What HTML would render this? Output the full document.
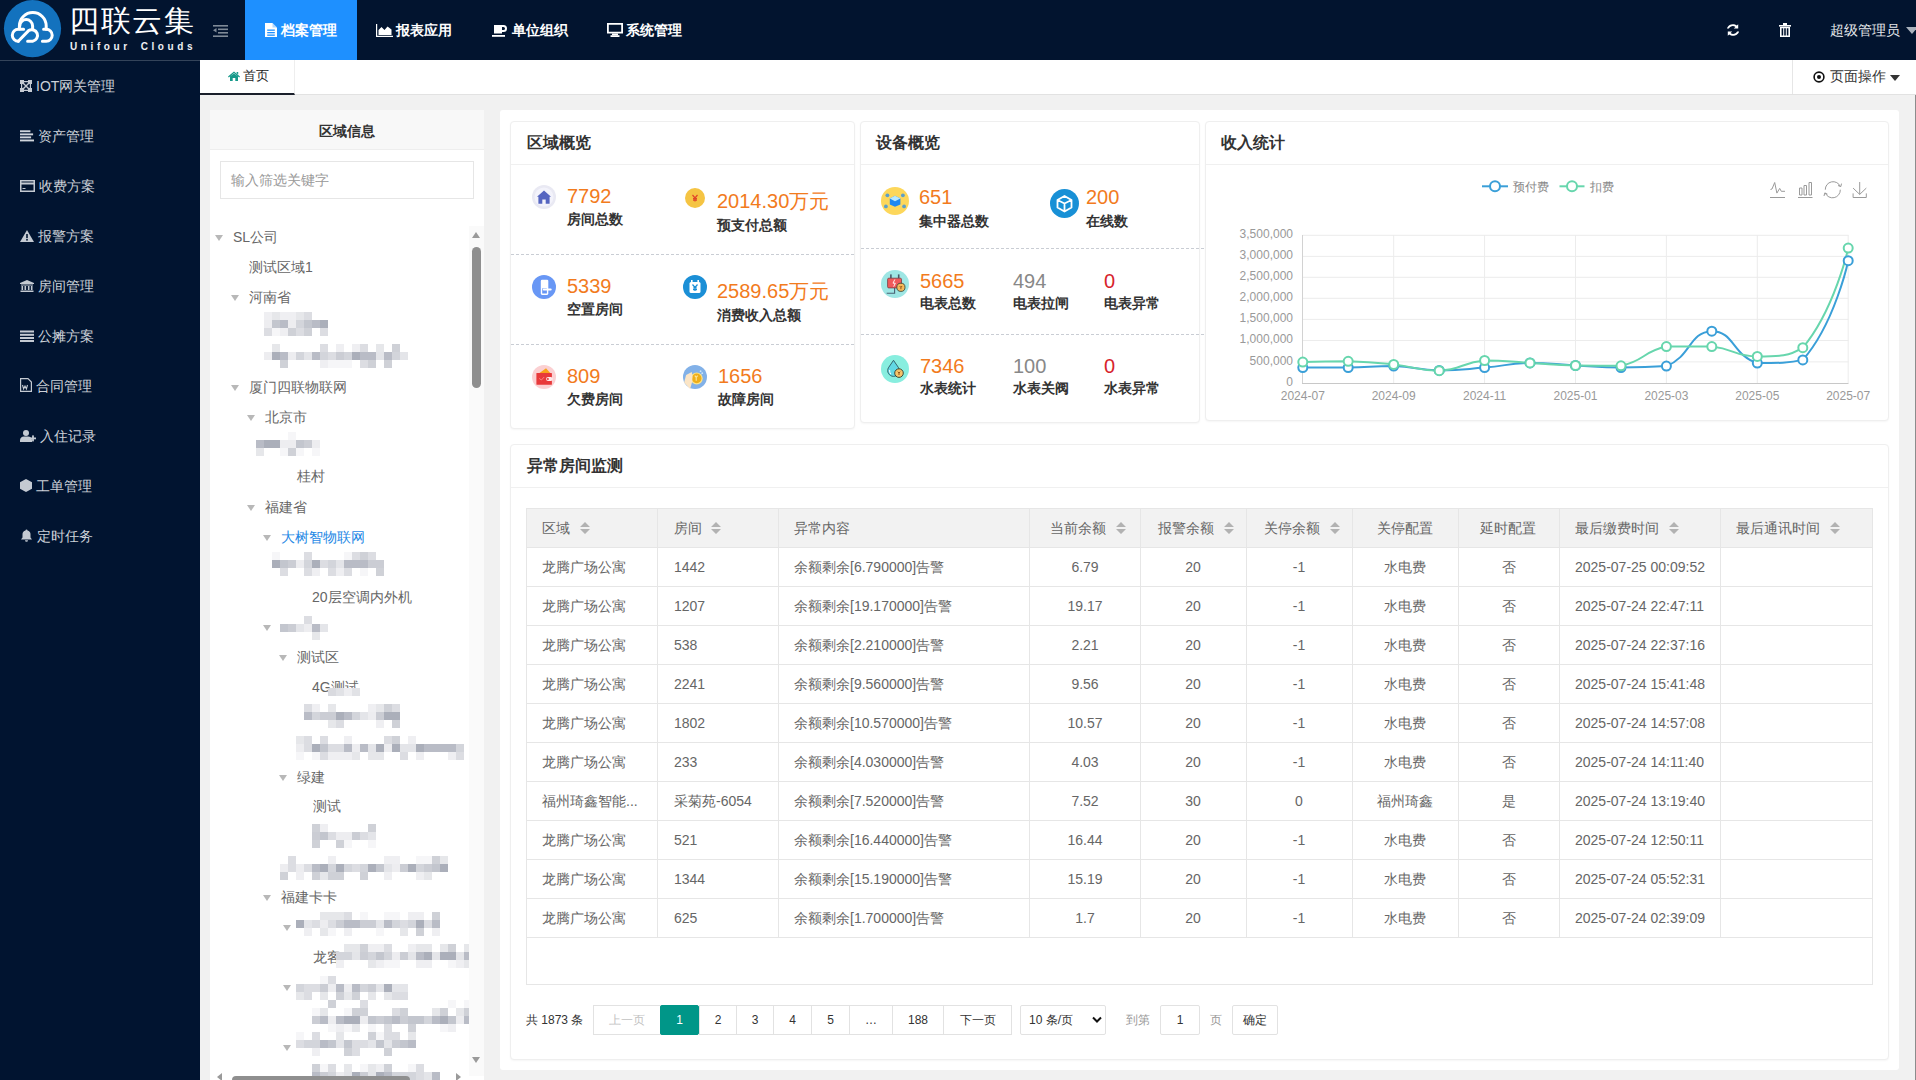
<!DOCTYPE html>
<html><head><meta charset="utf-8">
<style>
*{margin:0;padding:0;box-sizing:border-box}
html,body{width:1916px;height:1080px;overflow:hidden;background:#f1f1f1;font-family:"Liberation Sans",sans-serif;color:#333;position:relative}
.a{position:absolute}
#hdr{left:0;top:0;width:1916px;height:60px;background:#02142f}
#side{left:0;top:60px;width:200px;height:1020px;background:#011430;border-top:1px solid #34445a}
.nav{top:0;height:60px;line-height:60px;color:#fff;font-size:14px;font-weight:bold;white-space:nowrap}
.sit{left:20px;height:20px;line-height:20px;color:#ccd1d8;font-size:14px;font-weight:500;white-space:nowrap}
.sit svg{vertical-align:-1px;margin-right:4px}
#tabbar{left:200px;top:60px;width:1716px;height:35px;background:#fff;border-bottom:1px solid #e2e2e2}
#tree{left:210px;top:110px;width:274px;height:970px;background:#fff}
#main{left:500px;top:110px;width:1399px;height:960px;background:#fff;border-radius:3px}
.card{background:#fff;border:1px solid #efefef;border-radius:4px;box-shadow:0 1px 2px rgba(0,0,0,0.04)}
.ctitle{left:16px;top:12px;font-size:16px;font-weight:bold;color:#333;white-space:nowrap}
.chd{left:0;top:42px;height:1px;width:100%;background:#f0f0f0}
.dash{height:0;border-top:1px dashed #c9cdd4}
.num{font-size:20px;color:#f27b1d;white-space:nowrap;line-height:20px}
.lbl{font-size:14px;font-weight:bold;color:#333;white-space:nowrap;line-height:16px}
.ic{border-radius:50%}
.tr{font-size:14px;color:#666;white-space:nowrap;line-height:16px}
.tri{width:0;height:0;border-left:4.5px solid transparent;border-right:4.5px solid transparent;border-top:6px solid #b8b8b8}
.blur{background:#dcdde2}
table{border-collapse:collapse;table-layout:fixed}
td,th{border:1px solid #e6e6e6;font-size:14px;color:#666;font-weight:normal;height:39px;padding:0 15px;white-space:nowrap;overflow:hidden}
th{background:#f2f2f2}
.td{font-size:14px;line-height:16px;color:#666;white-space:nowrap}
.pg{top:1005px;height:30px;line-height:28px;border:1px solid #e2e2e2;font-size:12px;color:#333;text-align:center;background:#fff}
</style></head><body>
<!-- HEADER -->
<div id="hdr" class="a"></div>
<svg class="a" style="left:0;top:0" width="64" height="60" viewBox="0 0 64 60">
<circle cx="32.5" cy="28.6" r="28.6" fill="#1372be"/>
<g fill="none" stroke="#fff" stroke-width="3" stroke-linecap="round" stroke-linejoin="round">
<path d="M18.3 41.2 A6 6 0 0 1 18.3 29.2 L23.6 29.2"/>
<path d="M18.3 41.2 L28.6 30.6 A5.8 5.8 0 1 1 32.7 41.2 L27.6 41.2"/>
<path d="M42.4 41.2 L46.2 41.2 A6 6 0 0 0 46.2 29.2 L43.6 29.2"/>
<path d="M19.4 29 L19.4 26 A13.4 13.4 0 0 1 46.2 26 L46.2 29.2"/>
<path d="M19.8 26 A6.4 6.4 0 0 1 32.6 26 L32.6 29.6"/>
</g></svg>
<div class="a" style="left:69px;top:3px;font-size:30px;line-height:36px;color:#fff;font-weight:300;letter-spacing:1.5px;white-space:nowrap">四联云集</div>
<div class="a" style="left:70px;top:41px;font-size:10px;line-height:12px;color:#eef0f3;font-weight:bold;letter-spacing:3.6px;word-spacing:3.5px;white-space:nowrap">Unifour Clouds</div>
<svg class="a" style="left:213px;top:25px" width="15" height="12" viewBox="0 0 15 12"><g fill="#7f8a97"><rect x="0" y="0" width="15" height="1.6"/><rect x="5" y="3.5" width="10" height="1.6"/><rect x="5" y="7" width="10" height="1.6"/><rect x="0" y="10.4" width="15" height="1.6"/><path d="M0 5.3 L3.5 3 L3.5 7.6Z"/></g></svg>
<div class="a" style="left:245px;top:0;width:112px;height:60px;background:#1e90ff"></div>
<svg class="a" style="left:265px;top:23px" width="12" height="14" viewBox="0 0 12 14"><path d="M0 0 H7.5 L12 4.5 V14 H0Z" fill="#fff"/><path d="M7.5 0 V4.5 H12" fill="#1e90ff" opacity="0.35"/><g fill="#1e90ff"><rect x="2.2" y="6.5" width="7.6" height="1.3"/><rect x="2.2" y="9" width="7.6" height="1.3"/><rect x="2.2" y="11.5" width="7.6" height="1.3"/></g></svg>
<div class="a nav" style="left:281px">档案管理</div>
<svg class="a" style="left:376px;top:24px" width="17" height="13" viewBox="0 0 17 13"><path d="M0 0 V13 H17 V11.8 H1.2 V0Z" fill="#fff"/><path d="M2.5 11 V6 L5.5 3 L8.5 6 L11.5 2.5 L15.5 5.5 V11Z" fill="#fff"/></svg>
<div class="a nav" style="left:396px">报表应用</div>
<svg class="a" style="left:492px;top:25px" width="16" height="12" viewBox="0 0 16 12"><path d="M2 0 H11.5 A3.5 3.5 0 0 1 11.5 7 H10 V8.5 H2Z M10 2 V5 H11.5 A1.5 1.5 0 0 0 11.5 2Z" fill="#fff" fill-rule="evenodd"/><rect x="0" y="10" width="13" height="1.8" fill="#fff"/></svg>
<div class="a nav" style="left:512px">单位组织</div>
<svg class="a" style="left:607px;top:23px" width="16" height="14" viewBox="0 0 16 14"><path d="M0 0 H16 V10.5 H0Z M1.8 1.8 V8.7 H14.2 V1.8Z" fill="#fff" fill-rule="evenodd"/><rect x="5" y="10.5" width="6" height="1.8" fill="#fff"/><rect x="3.5" y="12.2" width="9" height="1.8" fill="#fff"/></svg>
<div class="a nav" style="left:626px">系统管理</div>
<svg class="a" style="left:1726px;top:23px" width="14" height="14" viewBox="0 0 14 14"><g fill="#fff"><path d="M12.2 1.2 V5.6 H7.8 L9.4 4 A4.2 4.2 0 0 0 2.9 5.6 H0.9 A6.2 6.2 0 0 1 10.8 2.6Z"/><path d="M1.8 12.8 V8.4 H6.2 L4.6 10 A4.2 4.2 0 0 0 11.1 8.4 H13.1 A6.2 6.2 0 0 1 3.2 11.4Z"/></g></svg>
<svg class="a" style="left:1779px;top:23px" width="12" height="14" viewBox="0 0 12 14"><g fill="#fff"><rect x="0" y="2" width="12" height="1.6"/><rect x="4" y="0" width="4" height="2.5"/><path d="M1 4 H11 V14 H1Z M2.6 5.2 V12.6 H4.2 V5.2Z M5.2 5.2 V12.6 H6.8 V5.2Z M7.8 5.2 V12.6 H9.4 V5.2Z" fill-rule="evenodd"/></g></svg>
<div class="a nav" style="left:1830px;font-weight:normal;color:#e6e8eb">超级管理员</div>
<div class="a" style="left:1906px;top:27px;width:0;height:0;border-left:6px solid transparent;border-right:6px solid transparent;border-top:7px solid #aab2bd"></div>
<div id="side" class="a"></div>
<div class="a sit" style="top:76px"><svg width="12" height="12" viewBox="0 0 12 12"><g fill="#c4cad2"><rect x="0" y="0" width="4" height="4"/><rect x="8" y="0" width="4" height="4"/><rect x="0" y="8" width="4" height="4"/><rect x="8" y="8" width="4" height="4"/><path d="M3 2 L10 9 L9 10 L2 3Z M9 2 L10 3 L3 10 L2 9Z"/><path d="M4 1 H8 V2.2 H4Z M4 9.8 H8 V11 H4Z M1 4 H2.2 V8 H1Z M9.8 4 H11 V8 H9.8Z"/></g></svg>IOT网关管理</div>
<div class="a sit" style="top:126px"><svg width="14" height="12" viewBox="0 0 14 12"><g fill="#d0d5dc"><rect x="0" y="0.3" width="10.4" height="1.9"/><rect x="0" y="3.4" width="13.1" height="1.9"/><rect x="0" y="6.4" width="11.1" height="1.9"/><rect x="0" y="9.5" width="14.2" height="1.9"/></g></svg>资产管理</div>
<div class="a sit" style="top:176px"><svg width="15" height="12" viewBox="0 0 15 12"><path d="M0 0 H15 V12 H0Z M1.5 4.5 V10.5 H13.5 V4.5Z M1.5 1.5 V2.5 H13.5 V1.5Z" fill="#c4cad2" fill-rule="evenodd"/><rect x="2.5" y="8" width="3" height="1" fill="#c4cad2"/></svg>收费方案</div>
<div class="a sit" style="top:226px"><svg width="14" height="12" viewBox="0 0 14 12"><path d="M7 0 L14 12 H0Z" fill="#c4cad2"/><rect x="6.2" y="4" width="1.6" height="4.2" fill="#011430"/><rect x="6.2" y="9" width="1.6" height="1.6" fill="#011430"/></svg>报警方案</div>
<div class="a sit" style="top:276px"><svg width="14" height="12" viewBox="0 0 14 12"><g fill="#c4cad2"><path d="M7 0 L14 3 V4 H0 V3Z"/><rect x="1" y="4.5" width="12" height="1"/><rect x="1.5" y="6" width="1.6" height="4"/><rect x="4.5" y="6" width="1.6" height="4"/><rect x="7.9" y="6" width="1.6" height="4"/><rect x="10.9" y="6" width="1.6" height="4"/><rect x="0.5" y="10.5" width="13" height="1.5"/></g></svg>房间管理</div>
<div class="a sit" style="top:326px"><svg width="14" height="12" viewBox="0 0 14 12"><g fill="#c4cad2"><rect x="0" y="0.5" width="14" height="2"/><rect x="0" y="3.8" width="14" height="2"/><rect x="0" y="7" width="14" height="2"/><rect x="0" y="10" width="14" height="2"/></g></svg>公摊方案</div>
<div class="a sit" style="top:376px"><svg width="12" height="14" viewBox="0 0 12 14"><path d="M0.6 0.6 H8 L11.4 4 V13.4 H0.6Z" fill="none" stroke="#c4cad2" stroke-width="1.2"/><path d="M2.5 7 L3.6 11 L5 8 L6.4 11 L7.5 7" fill="none" stroke="#c4cad2" stroke-width="1.1"/></svg>合同管理</div>
<div class="a sit" style="top:426px"><svg width="16" height="12" viewBox="0 0 16 12"><g fill="#c4cad2"><circle cx="6" cy="3" r="3"/><path d="M0 12 V10 A4 4 0 0 1 4 6.5 H8 A4 4 0 0 1 12 10 V12Z"/><rect x="10" y="7.5" width="6" height="1.8"/><rect x="12.1" y="5.4" width="1.8" height="6"/></g></svg>入住记录</div>
<div class="a sit" style="top:476px"><svg width="12" height="13" viewBox="0 0 12 13"><path d="M6 0 L12 3.2 V9.8 L6 13 L0 9.8 V3.2Z" fill="#c4cad2"/></svg>工单管理</div>
<div class="a sit" style="top:526px"><svg width="13" height="13" viewBox="0 0 13 13"><path d="M6.5 0.5 A1 1 0 0 1 7.5 1.5 A4 4 0 0 1 10.5 5.5 V8.5 L12 10.5 H1 L2.5 8.5 V5.5 A4 4 0 0 1 5.5 1.5 A1 1 0 0 1 6.5 0.5Z M5 11.2 H8 A1.5 1.5 0 0 1 5 11.2Z" fill="#c4cad2"/></svg>定时任务</div>
<div id="tabbar" class="a"></div>
<div class="a" style="left:200px;top:60px;width:95px;height:35px;background:#fff;border-right:1px solid #eee;border-bottom:2px solid #1a1f2b"></div>
<svg class="a" style="left:228px;top:71px" width="12" height="10" viewBox="0 0 12 10"><path d="M6 0.5 L12 5.6 L11.2 6.4 L6 2 L0.8 6.4 L0 5.6Z M8.6 1 H10.2 V3.6 L8.6 2.3Z M2 5.6 L6 2.4 L10 5.6 V10 H7.3 V7 H4.7 V10 H2Z" fill="#16998a"/></svg>
<div class="a" style="left:243px;top:68px;font-size:13px;line-height:16px;color:#222;white-space:nowrap">首页</div>
<div class="a" style="left:1792px;top:60px;width:1px;height:34px;background:#e6e6e6"></div>
<svg class="a" style="left:1813px;top:71px" width="12" height="12" viewBox="0 0 12 12"><circle cx="6" cy="6" r="4.9" fill="none" stroke="#111" stroke-width="1.6"/><circle cx="6" cy="6" r="2" fill="#111"/></svg>
<div class="a" style="left:1830px;top:68px;font-size:14px;line-height:16px;color:#333;white-space:nowrap">页面操作</div>
<div class="a" style="left:1890px;top:75px;width:0;height:0;border-left:5.5px solid transparent;border-right:5.5px solid transparent;border-top:6px solid #333"></div>
<div class="a" style="left:1915px;top:95px;width:1px;height:985px;background:#8c8c8c"></div>
<div id="tree" class="a"></div>
<div class="a" style="left:210px;top:110px;width:274px;height:40px;background:#f8f8f8;border-bottom:1px solid #eee"></div>
<div class="a" style="left:210px;top:123px;width:274px;text-align:center;font-size:14px;line-height:16px;font-weight:bold;color:#333">区域信息</div>
<div class="a" style="left:220px;top:161px;width:254px;height:38px;border:1px solid #e6e6e6;background:#fff"></div>
<div class="a" style="left:231px;top:172px;font-size:14px;line-height:16px;color:#999;white-space:nowrap">输入筛选关键字</div>
<div class="a tri" style="left:215px;top:235px"></div>
<div class="a tr" style="left:233px;top:229px">SL公司</div>
<div class="a tr" style="left:249px;top:259px">测试区域1</div>
<div class="a tri" style="left:231px;top:295px"></div>
<div class="a tr" style="left:249px;top:289px">河南省</div>
<div class="a tri" style="left:231px;top:385px"></div>
<div class="a tr" style="left:249px;top:379px">厦门四联物联网</div>
<div class="a tri" style="left:247px;top:415px"></div>
<div class="a tr" style="left:265px;top:409px">北京市</div>
<div class="a tr" style="left:297px;top:468px">桂村</div>
<div class="a tri" style="left:247px;top:505px"></div>
<div class="a tr" style="left:265px;top:499px">福建省</div>
<div class="a tri" style="left:263px;top:535px"></div>
<div class="a tr" style="left:281px;top:529px;color:#1e88e5">大树智物联网</div>
<div class="a tr" style="left:312px;top:589px">20层空调内外机</div>
<div class="a tri" style="left:263px;top:625px"></div>
<div class="a tri" style="left:279px;top:655px"></div>
<div class="a tr" style="left:297px;top:649px">测试区</div>
<div class="a tr" style="left:312px;top:679px">4G测试</div>
<div class="a tri" style="left:279px;top:775px"></div>
<div class="a tr" style="left:297px;top:769px">绿建</div>
<div class="a tr" style="left:313px;top:798px">测试</div>
<div class="a tri" style="left:263px;top:895px"></div>
<div class="a tr" style="left:281px;top:889px">福建卡卡</div>
<div class="a tri" style="left:283px;top:925px"></div>
<div class="a tr" style="left:313px;top:949px">龙客</div>
<div class="a tri" style="left:283px;top:985px"></div>
<div class="a tri" style="left:283px;top:1045px"></div>
<svg class="a" style="left:0;top:0" width="484" height="1080" viewBox="0 0 484 1080" shape-rendering="crispEdges">
<rect x="264" y="312" width="8" height="8" fill="#efeff2"/>
<rect x="272" y="312" width="8" height="8" fill="#e6e7ea"/>
<rect x="280" y="312" width="8" height="8" fill="#efeff2"/>
<rect x="288" y="312" width="8" height="8" fill="#efeff2"/>
<rect x="296" y="312" width="8" height="8" fill="#e6e7ea"/>
<rect x="304" y="312" width="8" height="8" fill="#dcdde2"/>
<rect x="264" y="320" width="8" height="8" fill="#ededf0"/>
<rect x="272" y="320" width="8" height="8" fill="#c3c6ce"/>
<rect x="280" y="320" width="8" height="8" fill="#b9bcc6"/>
<rect x="288" y="320" width="8" height="8" fill="#ededf0"/>
<rect x="296" y="320" width="8" height="8" fill="#d3d5db"/>
<rect x="304" y="320" width="8" height="8" fill="#c3c6ce"/>
<rect x="312" y="320" width="8" height="8" fill="#b9bcc6"/>
<rect x="320" y="320" width="8" height="8" fill="#abafba"/>
<rect x="264" y="328" width="8" height="8" fill="#dcdde2"/>
<rect x="272" y="328" width="8" height="8" fill="#f6f6f8"/>
<rect x="280" y="328" width="8" height="8" fill="#efeff2"/>
<rect x="288" y="328" width="8" height="8" fill="#cfd1d7"/>
<rect x="296" y="328" width="8" height="8" fill="#dcdde2"/>
<rect x="304" y="328" width="8" height="8" fill="#cfd1d7"/>
<rect x="320" y="328" width="8" height="8" fill="#dcdde2"/>
<rect x="272" y="344" width="8" height="8" fill="#e6e7ea"/>
<rect x="320" y="344" width="8" height="8" fill="#dcdde2"/>
<rect x="336" y="344" width="8" height="8" fill="#efeff2"/>
<rect x="352" y="344" width="8" height="8" fill="#efeff2"/>
<rect x="360" y="344" width="8" height="8" fill="#dcdde2"/>
<rect x="376" y="344" width="8" height="8" fill="#e6e7ea"/>
<rect x="392" y="344" width="8" height="8" fill="#cfd1d7"/>
<rect x="264" y="352" width="8" height="8" fill="#ededf0"/>
<rect x="272" y="352" width="8" height="8" fill="#abafba"/>
<rect x="280" y="352" width="8" height="8" fill="#b9bcc6"/>
<rect x="288" y="352" width="8" height="8" fill="#ededf0"/>
<rect x="296" y="352" width="8" height="8" fill="#d3d5db"/>
<rect x="304" y="352" width="8" height="8" fill="#e4e5e9"/>
<rect x="312" y="352" width="8" height="8" fill="#b9bcc6"/>
<rect x="320" y="352" width="8" height="8" fill="#d3d5db"/>
<rect x="328" y="352" width="8" height="8" fill="#dcdde2"/>
<rect x="336" y="352" width="8" height="8" fill="#cbcdd4"/>
<rect x="344" y="352" width="8" height="8" fill="#d3d5db"/>
<rect x="352" y="352" width="8" height="8" fill="#abafba"/>
<rect x="360" y="352" width="8" height="8" fill="#b9bcc6"/>
<rect x="368" y="352" width="8" height="8" fill="#b9bcc6"/>
<rect x="376" y="352" width="8" height="8" fill="#e4e5e9"/>
<rect x="384" y="352" width="8" height="8" fill="#b9bcc6"/>
<rect x="392" y="352" width="8" height="8" fill="#d3d5db"/>
<rect x="400" y="352" width="8" height="8" fill="#e4e5e9"/>
<rect x="280" y="360" width="8" height="8" fill="#cfd1d7"/>
<rect x="320" y="360" width="8" height="8" fill="#efeff2"/>
<rect x="328" y="360" width="8" height="8" fill="#f6f6f8"/>
<rect x="336" y="360" width="8" height="8" fill="#f6f6f8"/>
<rect x="344" y="360" width="8" height="8" fill="#f6f6f8"/>
<rect x="360" y="360" width="8" height="8" fill="#dcdde2"/>
<rect x="368" y="360" width="8" height="8" fill="#cfd1d7"/>
<rect x="384" y="360" width="8" height="8" fill="#cfd1d7"/>
<rect x="288" y="432" width="8" height="8" fill="#f6f6f8"/>
<rect x="256" y="440" width="8" height="8" fill="#b9bcc6"/>
<rect x="264" y="440" width="8" height="8" fill="#abafba"/>
<rect x="272" y="440" width="8" height="8" fill="#abafba"/>
<rect x="280" y="440" width="8" height="8" fill="#ededf0"/>
<rect x="288" y="440" width="8" height="8" fill="#ededf0"/>
<rect x="296" y="440" width="8" height="8" fill="#c3c6ce"/>
<rect x="304" y="440" width="8" height="8" fill="#cbcdd4"/>
<rect x="312" y="440" width="8" height="8" fill="#ededf0"/>
<rect x="256" y="448" width="8" height="8" fill="#e6e7ea"/>
<rect x="280" y="448" width="8" height="8" fill="#f6f6f8"/>
<rect x="288" y="448" width="8" height="8" fill="#cfd1d7"/>
<rect x="296" y="448" width="8" height="8" fill="#f6f6f8"/>
<rect x="312" y="448" width="8" height="8" fill="#f6f6f8"/>
<rect x="272" y="552" width="8" height="8" fill="#f6f6f8"/>
<rect x="304" y="552" width="8" height="8" fill="#dcdde2"/>
<rect x="344" y="552" width="8" height="8" fill="#f6f6f8"/>
<rect x="352" y="552" width="8" height="8" fill="#dcdde2"/>
<rect x="360" y="552" width="8" height="8" fill="#cfd1d7"/>
<rect x="368" y="552" width="8" height="8" fill="#dcdde2"/>
<rect x="272" y="560" width="8" height="8" fill="#abafba"/>
<rect x="280" y="560" width="8" height="8" fill="#c3c6ce"/>
<rect x="288" y="560" width="8" height="8" fill="#cbcdd4"/>
<rect x="296" y="560" width="8" height="8" fill="#ededf0"/>
<rect x="304" y="560" width="8" height="8" fill="#d3d5db"/>
<rect x="312" y="560" width="8" height="8" fill="#abafba"/>
<rect x="320" y="560" width="8" height="8" fill="#dcdde2"/>
<rect x="328" y="560" width="8" height="8" fill="#d3d5db"/>
<rect x="336" y="560" width="8" height="8" fill="#e4e5e9"/>
<rect x="344" y="560" width="8" height="8" fill="#b9bcc6"/>
<rect x="352" y="560" width="8" height="8" fill="#b9bcc6"/>
<rect x="360" y="560" width="8" height="8" fill="#b9bcc6"/>
<rect x="368" y="560" width="8" height="8" fill="#cbcdd4"/>
<rect x="376" y="560" width="8" height="8" fill="#cbcdd4"/>
<rect x="280" y="568" width="8" height="8" fill="#dcdde2"/>
<rect x="304" y="568" width="8" height="8" fill="#dcdde2"/>
<rect x="312" y="568" width="8" height="8" fill="#efeff2"/>
<rect x="328" y="568" width="8" height="8" fill="#dcdde2"/>
<rect x="336" y="568" width="8" height="8" fill="#efeff2"/>
<rect x="344" y="568" width="8" height="8" fill="#dcdde2"/>
<rect x="360" y="568" width="8" height="8" fill="#f6f6f8"/>
<rect x="376" y="568" width="8" height="8" fill="#cfd1d7"/>
<rect x="304" y="616" width="8" height="8" fill="#dcdde2"/>
<rect x="280" y="624" width="8" height="8" fill="#c3c6ce"/>
<rect x="288" y="624" width="8" height="8" fill="#cbcdd4"/>
<rect x="296" y="624" width="8" height="8" fill="#e4e5e9"/>
<rect x="304" y="624" width="8" height="8" fill="#ededf0"/>
<rect x="312" y="624" width="8" height="8" fill="#b9bcc6"/>
<rect x="320" y="624" width="8" height="8" fill="#e4e5e9"/>
<rect x="312" y="632" width="8" height="8" fill="#e6e7ea"/>
<rect x="328" y="688" width="8" height="8" fill="#d9dadf"/>
<rect x="336" y="688" width="8" height="8" fill="#e1e2e6"/>
<rect x="344" y="688" width="8" height="8" fill="#eeeef1"/>
<rect x="352" y="688" width="8" height="8" fill="#e1e2e6"/>
<rect x="304" y="704" width="8" height="8" fill="#dcdde2"/>
<rect x="312" y="704" width="8" height="8" fill="#efeff2"/>
<rect x="328" y="704" width="8" height="8" fill="#e6e7ea"/>
<rect x="368" y="704" width="8" height="8" fill="#efeff2"/>
<rect x="376" y="704" width="8" height="8" fill="#e6e7ea"/>
<rect x="384" y="704" width="8" height="8" fill="#cfd1d7"/>
<rect x="392" y="704" width="8" height="8" fill="#dcdde2"/>
<rect x="304" y="712" width="8" height="8" fill="#b9bcc6"/>
<rect x="312" y="712" width="8" height="8" fill="#d3d5db"/>
<rect x="320" y="712" width="8" height="8" fill="#cbcdd4"/>
<rect x="328" y="712" width="8" height="8" fill="#cbcdd4"/>
<rect x="336" y="712" width="8" height="8" fill="#abafba"/>
<rect x="344" y="712" width="8" height="8" fill="#b9bcc6"/>
<rect x="352" y="712" width="8" height="8" fill="#d3d5db"/>
<rect x="360" y="712" width="8" height="8" fill="#e4e5e9"/>
<rect x="368" y="712" width="8" height="8" fill="#ededf0"/>
<rect x="376" y="712" width="8" height="8" fill="#cbcdd4"/>
<rect x="384" y="712" width="8" height="8" fill="#abafba"/>
<rect x="392" y="712" width="8" height="8" fill="#abafba"/>
<rect x="328" y="720" width="8" height="8" fill="#e6e7ea"/>
<rect x="336" y="720" width="8" height="8" fill="#dcdde2"/>
<rect x="376" y="720" width="8" height="8" fill="#efeff2"/>
<rect x="392" y="720" width="8" height="8" fill="#cfd1d7"/>
<rect x="296" y="736" width="8" height="8" fill="#e6e7ea"/>
<rect x="304" y="736" width="8" height="8" fill="#dcdde2"/>
<rect x="320" y="736" width="8" height="8" fill="#dcdde2"/>
<rect x="344" y="736" width="8" height="8" fill="#efeff2"/>
<rect x="384" y="736" width="8" height="8" fill="#dcdde2"/>
<rect x="392" y="736" width="8" height="8" fill="#cfd1d7"/>
<rect x="408" y="736" width="8" height="8" fill="#efeff2"/>
<rect x="296" y="744" width="8" height="8" fill="#ededf0"/>
<rect x="304" y="744" width="8" height="8" fill="#dcdde2"/>
<rect x="312" y="744" width="8" height="8" fill="#abafba"/>
<rect x="320" y="744" width="8" height="8" fill="#c3c6ce"/>
<rect x="328" y="744" width="8" height="8" fill="#dcdde2"/>
<rect x="336" y="744" width="8" height="8" fill="#dcdde2"/>
<rect x="344" y="744" width="8" height="8" fill="#b9bcc6"/>
<rect x="352" y="744" width="8" height="8" fill="#ededf0"/>
<rect x="360" y="744" width="8" height="8" fill="#b9bcc6"/>
<rect x="368" y="744" width="8" height="8" fill="#e4e5e9"/>
<rect x="376" y="744" width="8" height="8" fill="#abafba"/>
<rect x="384" y="744" width="8" height="8" fill="#ededf0"/>
<rect x="392" y="744" width="8" height="8" fill="#abafba"/>
<rect x="400" y="744" width="8" height="8" fill="#e4e5e9"/>
<rect x="408" y="744" width="8" height="8" fill="#e4e5e9"/>
<rect x="416" y="744" width="8" height="8" fill="#abafba"/>
<rect x="424" y="744" width="8" height="8" fill="#b9bcc6"/>
<rect x="432" y="744" width="8" height="8" fill="#b9bcc6"/>
<rect x="440" y="744" width="8" height="8" fill="#b9bcc6"/>
<rect x="448" y="744" width="8" height="8" fill="#b9bcc6"/>
<rect x="456" y="744" width="8" height="8" fill="#d3d5db"/>
<rect x="296" y="752" width="8" height="8" fill="#f6f6f8"/>
<rect x="312" y="752" width="8" height="8" fill="#f6f6f8"/>
<rect x="320" y="752" width="8" height="8" fill="#dcdde2"/>
<rect x="328" y="752" width="8" height="8" fill="#efeff2"/>
<rect x="336" y="752" width="8" height="8" fill="#efeff2"/>
<rect x="344" y="752" width="8" height="8" fill="#efeff2"/>
<rect x="352" y="752" width="8" height="8" fill="#e6e7ea"/>
<rect x="368" y="752" width="8" height="8" fill="#e6e7ea"/>
<rect x="376" y="752" width="8" height="8" fill="#e6e7ea"/>
<rect x="400" y="752" width="8" height="8" fill="#dcdde2"/>
<rect x="416" y="752" width="8" height="8" fill="#efeff2"/>
<rect x="448" y="752" width="8" height="8" fill="#efeff2"/>
<rect x="456" y="752" width="8" height="8" fill="#dcdde2"/>
<rect x="312" y="824" width="8" height="8" fill="#cfd1d7"/>
<rect x="320" y="824" width="8" height="8" fill="#efeff2"/>
<rect x="368" y="824" width="8" height="8" fill="#cfd1d7"/>
<rect x="312" y="832" width="8" height="8" fill="#cbcdd4"/>
<rect x="320" y="832" width="8" height="8" fill="#c3c6ce"/>
<rect x="328" y="832" width="8" height="8" fill="#dcdde2"/>
<rect x="336" y="832" width="8" height="8" fill="#ededf0"/>
<rect x="344" y="832" width="8" height="8" fill="#ededf0"/>
<rect x="352" y="832" width="8" height="8" fill="#cbcdd4"/>
<rect x="360" y="832" width="8" height="8" fill="#dcdde2"/>
<rect x="368" y="832" width="8" height="8" fill="#e4e5e9"/>
<rect x="312" y="840" width="8" height="8" fill="#cfd1d7"/>
<rect x="336" y="840" width="8" height="8" fill="#cfd1d7"/>
<rect x="344" y="840" width="8" height="8" fill="#f6f6f8"/>
<rect x="368" y="840" width="8" height="8" fill="#f6f6f8"/>
<rect x="288" y="856" width="8" height="8" fill="#dcdde2"/>
<rect x="328" y="856" width="8" height="8" fill="#efeff2"/>
<rect x="384" y="856" width="8" height="8" fill="#efeff2"/>
<rect x="392" y="856" width="8" height="8" fill="#efeff2"/>
<rect x="416" y="856" width="8" height="8" fill="#f6f6f8"/>
<rect x="424" y="856" width="8" height="8" fill="#f6f6f8"/>
<rect x="432" y="856" width="8" height="8" fill="#cfd1d7"/>
<rect x="440" y="856" width="8" height="8" fill="#e6e7ea"/>
<rect x="280" y="864" width="8" height="8" fill="#ededf0"/>
<rect x="288" y="864" width="8" height="8" fill="#dcdde2"/>
<rect x="296" y="864" width="8" height="8" fill="#ededf0"/>
<rect x="304" y="864" width="8" height="8" fill="#dcdde2"/>
<rect x="312" y="864" width="8" height="8" fill="#b9bcc6"/>
<rect x="320" y="864" width="8" height="8" fill="#abafba"/>
<rect x="328" y="864" width="8" height="8" fill="#d3d5db"/>
<rect x="336" y="864" width="8" height="8" fill="#abafba"/>
<rect x="344" y="864" width="8" height="8" fill="#d3d5db"/>
<rect x="352" y="864" width="8" height="8" fill="#dcdde2"/>
<rect x="360" y="864" width="8" height="8" fill="#d3d5db"/>
<rect x="368" y="864" width="8" height="8" fill="#abafba"/>
<rect x="376" y="864" width="8" height="8" fill="#c3c6ce"/>
<rect x="384" y="864" width="8" height="8" fill="#e4e5e9"/>
<rect x="392" y="864" width="8" height="8" fill="#ededf0"/>
<rect x="400" y="864" width="8" height="8" fill="#cbcdd4"/>
<rect x="408" y="864" width="8" height="8" fill="#abafba"/>
<rect x="416" y="864" width="8" height="8" fill="#d3d5db"/>
<rect x="424" y="864" width="8" height="8" fill="#cbcdd4"/>
<rect x="432" y="864" width="8" height="8" fill="#c3c6ce"/>
<rect x="440" y="864" width="8" height="8" fill="#abafba"/>
<rect x="280" y="872" width="8" height="8" fill="#cfd1d7"/>
<rect x="296" y="872" width="8" height="8" fill="#efeff2"/>
<rect x="312" y="872" width="8" height="8" fill="#cfd1d7"/>
<rect x="320" y="872" width="8" height="8" fill="#e6e7ea"/>
<rect x="328" y="872" width="8" height="8" fill="#cfd1d7"/>
<rect x="336" y="872" width="8" height="8" fill="#cfd1d7"/>
<rect x="360" y="872" width="8" height="8" fill="#cfd1d7"/>
<rect x="384" y="872" width="8" height="8" fill="#efeff2"/>
<rect x="416" y="872" width="8" height="8" fill="#efeff2"/>
<rect x="424" y="872" width="8" height="8" fill="#e6e7ea"/>
<rect x="320" y="912" width="8" height="8" fill="#e6e7ea"/>
<rect x="328" y="912" width="8" height="8" fill="#e6e7ea"/>
<rect x="336" y="912" width="8" height="8" fill="#e6e7ea"/>
<rect x="344" y="912" width="8" height="8" fill="#dcdde2"/>
<rect x="360" y="912" width="8" height="8" fill="#f6f6f8"/>
<rect x="384" y="912" width="8" height="8" fill="#f6f6f8"/>
<rect x="392" y="912" width="8" height="8" fill="#f6f6f8"/>
<rect x="408" y="912" width="8" height="8" fill="#efeff2"/>
<rect x="416" y="912" width="8" height="8" fill="#efeff2"/>
<rect x="432" y="912" width="8" height="8" fill="#cfd1d7"/>
<rect x="296" y="920" width="8" height="8" fill="#abafba"/>
<rect x="304" y="920" width="8" height="8" fill="#e4e5e9"/>
<rect x="312" y="920" width="8" height="8" fill="#dcdde2"/>
<rect x="320" y="920" width="8" height="8" fill="#ededf0"/>
<rect x="328" y="920" width="8" height="8" fill="#dcdde2"/>
<rect x="336" y="920" width="8" height="8" fill="#cbcdd4"/>
<rect x="344" y="920" width="8" height="8" fill="#b9bcc6"/>
<rect x="352" y="920" width="8" height="8" fill="#b9bcc6"/>
<rect x="360" y="920" width="8" height="8" fill="#cbcdd4"/>
<rect x="368" y="920" width="8" height="8" fill="#cbcdd4"/>
<rect x="376" y="920" width="8" height="8" fill="#e4e5e9"/>
<rect x="384" y="920" width="8" height="8" fill="#b9bcc6"/>
<rect x="392" y="920" width="8" height="8" fill="#d3d5db"/>
<rect x="400" y="920" width="8" height="8" fill="#dcdde2"/>
<rect x="408" y="920" width="8" height="8" fill="#d3d5db"/>
<rect x="416" y="920" width="8" height="8" fill="#abafba"/>
<rect x="424" y="920" width="8" height="8" fill="#dcdde2"/>
<rect x="432" y="920" width="8" height="8" fill="#b9bcc6"/>
<rect x="304" y="928" width="8" height="8" fill="#efeff2"/>
<rect x="320" y="928" width="8" height="8" fill="#e6e7ea"/>
<rect x="328" y="928" width="8" height="8" fill="#f6f6f8"/>
<rect x="344" y="928" width="8" height="8" fill="#efeff2"/>
<rect x="376" y="928" width="8" height="8" fill="#f6f6f8"/>
<rect x="400" y="928" width="8" height="8" fill="#e6e7ea"/>
<rect x="416" y="928" width="8" height="8" fill="#cfd1d7"/>
<rect x="432" y="928" width="8" height="8" fill="#efeff2"/>
<rect x="344" y="944" width="8" height="8" fill="#e6e7ea"/>
<rect x="352" y="944" width="8" height="8" fill="#e6e7ea"/>
<rect x="360" y="944" width="8" height="8" fill="#cfd1d7"/>
<rect x="368" y="944" width="8" height="8" fill="#efeff2"/>
<rect x="376" y="944" width="8" height="8" fill="#efeff2"/>
<rect x="384" y="944" width="8" height="8" fill="#dcdde2"/>
<rect x="408" y="944" width="8" height="8" fill="#efeff2"/>
<rect x="416" y="944" width="8" height="8" fill="#e6e7ea"/>
<rect x="424" y="944" width="8" height="8" fill="#e6e7ea"/>
<rect x="440" y="944" width="8" height="8" fill="#e6e7ea"/>
<rect x="448" y="944" width="8" height="8" fill="#cfd1d7"/>
<rect x="464" y="944" width="8" height="8" fill="#e6e7ea"/>
<rect x="336" y="952" width="8" height="8" fill="#d3d5db"/>
<rect x="344" y="952" width="8" height="8" fill="#d3d5db"/>
<rect x="352" y="952" width="8" height="8" fill="#e4e5e9"/>
<rect x="360" y="952" width="8" height="8" fill="#cbcdd4"/>
<rect x="368" y="952" width="8" height="8" fill="#d3d5db"/>
<rect x="376" y="952" width="8" height="8" fill="#c3c6ce"/>
<rect x="384" y="952" width="8" height="8" fill="#d3d5db"/>
<rect x="392" y="952" width="8" height="8" fill="#ededf0"/>
<rect x="400" y="952" width="8" height="8" fill="#cbcdd4"/>
<rect x="408" y="952" width="8" height="8" fill="#e4e5e9"/>
<rect x="416" y="952" width="8" height="8" fill="#b9bcc6"/>
<rect x="424" y="952" width="8" height="8" fill="#abafba"/>
<rect x="432" y="952" width="8" height="8" fill="#e4e5e9"/>
<rect x="440" y="952" width="8" height="8" fill="#abafba"/>
<rect x="448" y="952" width="8" height="8" fill="#abafba"/>
<rect x="456" y="952" width="8" height="8" fill="#e4e5e9"/>
<rect x="464" y="952" width="8" height="8" fill="#b9bcc6"/>
<rect x="336" y="960" width="8" height="8" fill="#efeff2"/>
<rect x="368" y="960" width="8" height="8" fill="#e6e7ea"/>
<rect x="376" y="960" width="8" height="8" fill="#efeff2"/>
<rect x="384" y="960" width="8" height="8" fill="#f6f6f8"/>
<rect x="392" y="960" width="8" height="8" fill="#f6f6f8"/>
<rect x="416" y="960" width="8" height="8" fill="#efeff2"/>
<rect x="424" y="960" width="8" height="8" fill="#efeff2"/>
<rect x="448" y="960" width="8" height="8" fill="#f6f6f8"/>
<rect x="456" y="960" width="8" height="8" fill="#efeff2"/>
<rect x="464" y="960" width="8" height="8" fill="#e6e7ea"/>
<rect x="320" y="976" width="8" height="8" fill="#f6f6f8"/>
<rect x="328" y="976" width="8" height="8" fill="#dcdde2"/>
<rect x="296" y="984" width="8" height="8" fill="#d3d5db"/>
<rect x="304" y="984" width="8" height="8" fill="#dcdde2"/>
<rect x="312" y="984" width="8" height="8" fill="#dcdde2"/>
<rect x="320" y="984" width="8" height="8" fill="#cbcdd4"/>
<rect x="328" y="984" width="8" height="8" fill="#ededf0"/>
<rect x="336" y="984" width="8" height="8" fill="#b9bcc6"/>
<rect x="344" y="984" width="8" height="8" fill="#ededf0"/>
<rect x="352" y="984" width="8" height="8" fill="#b9bcc6"/>
<rect x="360" y="984" width="8" height="8" fill="#d3d5db"/>
<rect x="368" y="984" width="8" height="8" fill="#cbcdd4"/>
<rect x="376" y="984" width="8" height="8" fill="#e4e5e9"/>
<rect x="384" y="984" width="8" height="8" fill="#abafba"/>
<rect x="392" y="984" width="8" height="8" fill="#e4e5e9"/>
<rect x="400" y="984" width="8" height="8" fill="#e4e5e9"/>
<rect x="296" y="992" width="8" height="8" fill="#e6e7ea"/>
<rect x="304" y="992" width="8" height="8" fill="#dcdde2"/>
<rect x="320" y="992" width="8" height="8" fill="#e6e7ea"/>
<rect x="336" y="992" width="8" height="8" fill="#cfd1d7"/>
<rect x="344" y="992" width="8" height="8" fill="#e6e7ea"/>
<rect x="352" y="992" width="8" height="8" fill="#cfd1d7"/>
<rect x="368" y="992" width="8" height="8" fill="#e6e7ea"/>
<rect x="384" y="992" width="8" height="8" fill="#e6e7ea"/>
<rect x="392" y="992" width="8" height="8" fill="#dcdde2"/>
<rect x="400" y="992" width="8" height="8" fill="#dcdde2"/>
<rect x="328" y="1000" width="8" height="8" fill="#cfd1d7"/>
<rect x="360" y="1000" width="8" height="8" fill="#dcdde2"/>
<rect x="448" y="1000" width="8" height="8" fill="#f6f6f8"/>
<rect x="464" y="1000" width="8" height="8" fill="#f6f6f8"/>
<rect x="312" y="1008" width="8" height="8" fill="#f6f6f8"/>
<rect x="320" y="1008" width="8" height="8" fill="#e6e7ea"/>
<rect x="344" y="1008" width="8" height="8" fill="#f6f6f8"/>
<rect x="352" y="1008" width="8" height="8" fill="#cfd1d7"/>
<rect x="360" y="1008" width="8" height="8" fill="#cfd1d7"/>
<rect x="392" y="1008" width="8" height="8" fill="#dcdde2"/>
<rect x="400" y="1008" width="8" height="8" fill="#cfd1d7"/>
<rect x="432" y="1008" width="8" height="8" fill="#e6e7ea"/>
<rect x="440" y="1008" width="8" height="8" fill="#cfd1d7"/>
<rect x="456" y="1008" width="8" height="8" fill="#e6e7ea"/>
<rect x="464" y="1008" width="8" height="8" fill="#cfd1d7"/>
<rect x="312" y="1016" width="8" height="8" fill="#cbcdd4"/>
<rect x="320" y="1016" width="8" height="8" fill="#b9bcc6"/>
<rect x="328" y="1016" width="8" height="8" fill="#ededf0"/>
<rect x="336" y="1016" width="8" height="8" fill="#b9bcc6"/>
<rect x="344" y="1016" width="8" height="8" fill="#abafba"/>
<rect x="352" y="1016" width="8" height="8" fill="#abafba"/>
<rect x="360" y="1016" width="8" height="8" fill="#ededf0"/>
<rect x="368" y="1016" width="8" height="8" fill="#c3c6ce"/>
<rect x="376" y="1016" width="8" height="8" fill="#cbcdd4"/>
<rect x="384" y="1016" width="8" height="8" fill="#c3c6ce"/>
<rect x="392" y="1016" width="8" height="8" fill="#b9bcc6"/>
<rect x="400" y="1016" width="8" height="8" fill="#cbcdd4"/>
<rect x="408" y="1016" width="8" height="8" fill="#c3c6ce"/>
<rect x="416" y="1016" width="8" height="8" fill="#c3c6ce"/>
<rect x="424" y="1016" width="8" height="8" fill="#d3d5db"/>
<rect x="432" y="1016" width="8" height="8" fill="#b9bcc6"/>
<rect x="440" y="1016" width="8" height="8" fill="#abafba"/>
<rect x="448" y="1016" width="8" height="8" fill="#c3c6ce"/>
<rect x="456" y="1016" width="8" height="8" fill="#ededf0"/>
<rect x="464" y="1016" width="8" height="8" fill="#b9bcc6"/>
<rect x="328" y="1024" width="8" height="8" fill="#f6f6f8"/>
<rect x="336" y="1024" width="8" height="8" fill="#efeff2"/>
<rect x="344" y="1024" width="8" height="8" fill="#f6f6f8"/>
<rect x="352" y="1024" width="8" height="8" fill="#e6e7ea"/>
<rect x="368" y="1024" width="8" height="8" fill="#f6f6f8"/>
<rect x="384" y="1024" width="8" height="8" fill="#dcdde2"/>
<rect x="408" y="1024" width="8" height="8" fill="#cfd1d7"/>
<rect x="440" y="1024" width="8" height="8" fill="#f6f6f8"/>
<rect x="448" y="1024" width="8" height="8" fill="#efeff2"/>
<rect x="296" y="1032" width="8" height="8" fill="#f6f6f8"/>
<rect x="312" y="1032" width="8" height="8" fill="#dcdde2"/>
<rect x="336" y="1032" width="8" height="8" fill="#e6e7ea"/>
<rect x="368" y="1032" width="8" height="8" fill="#cfd1d7"/>
<rect x="376" y="1032" width="8" height="8" fill="#f6f6f8"/>
<rect x="384" y="1032" width="8" height="8" fill="#dcdde2"/>
<rect x="392" y="1032" width="8" height="8" fill="#dcdde2"/>
<rect x="408" y="1032" width="8" height="8" fill="#e6e7ea"/>
<rect x="296" y="1040" width="8" height="8" fill="#dcdde2"/>
<rect x="304" y="1040" width="8" height="8" fill="#d3d5db"/>
<rect x="312" y="1040" width="8" height="8" fill="#d3d5db"/>
<rect x="320" y="1040" width="8" height="8" fill="#b9bcc6"/>
<rect x="328" y="1040" width="8" height="8" fill="#c3c6ce"/>
<rect x="336" y="1040" width="8" height="8" fill="#e4e5e9"/>
<rect x="344" y="1040" width="8" height="8" fill="#c3c6ce"/>
<rect x="352" y="1040" width="8" height="8" fill="#dcdde2"/>
<rect x="360" y="1040" width="8" height="8" fill="#dcdde2"/>
<rect x="368" y="1040" width="8" height="8" fill="#e4e5e9"/>
<rect x="376" y="1040" width="8" height="8" fill="#c3c6ce"/>
<rect x="384" y="1040" width="8" height="8" fill="#e4e5e9"/>
<rect x="392" y="1040" width="8" height="8" fill="#cbcdd4"/>
<rect x="400" y="1040" width="8" height="8" fill="#c3c6ce"/>
<rect x="408" y="1040" width="8" height="8" fill="#b9bcc6"/>
<rect x="312" y="1048" width="8" height="8" fill="#efeff2"/>
<rect x="344" y="1048" width="8" height="8" fill="#cfd1d7"/>
<rect x="352" y="1048" width="8" height="8" fill="#dcdde2"/>
<rect x="384" y="1048" width="8" height="8" fill="#cfd1d7"/>
<rect x="312" y="1064" width="8" height="8" fill="#cfd1d7"/>
<rect x="320" y="1064" width="8" height="8" fill="#f6f6f8"/>
<rect x="328" y="1064" width="8" height="8" fill="#dcdde2"/>
<rect x="344" y="1064" width="8" height="8" fill="#e6e7ea"/>
<rect x="360" y="1064" width="8" height="8" fill="#f6f6f8"/>
<rect x="368" y="1064" width="8" height="8" fill="#e6e7ea"/>
<rect x="376" y="1064" width="8" height="8" fill="#efeff2"/>
<rect x="384" y="1064" width="8" height="8" fill="#cfd1d7"/>
<rect x="408" y="1064" width="8" height="8" fill="#f6f6f8"/>
<rect x="416" y="1064" width="8" height="8" fill="#dcdde2"/>
<rect x="312" y="1072" width="8" height="8" fill="#b9bcc6"/>
<rect x="320" y="1072" width="8" height="8" fill="#cbcdd4"/>
<rect x="328" y="1072" width="8" height="8" fill="#d3d5db"/>
<rect x="336" y="1072" width="8" height="8" fill="#ededf0"/>
<rect x="344" y="1072" width="8" height="8" fill="#e4e5e9"/>
<rect x="352" y="1072" width="8" height="8" fill="#abafba"/>
<rect x="360" y="1072" width="8" height="8" fill="#cbcdd4"/>
<rect x="368" y="1072" width="8" height="8" fill="#e4e5e9"/>
<rect x="376" y="1072" width="8" height="8" fill="#abafba"/>
<rect x="384" y="1072" width="8" height="8" fill="#b9bcc6"/>
<rect x="392" y="1072" width="8" height="8" fill="#d3d5db"/>
<rect x="400" y="1072" width="8" height="8" fill="#d3d5db"/>
<rect x="408" y="1072" width="8" height="8" fill="#d3d5db"/>
<rect x="416" y="1072" width="8" height="8" fill="#dcdde2"/>
<rect x="424" y="1072" width="8" height="8" fill="#e4e5e9"/>
<rect x="432" y="1072" width="8" height="8" fill="#b9bcc6"/>
</svg>
<div class="a" style="left:469px;top:226px;width:15px;height:850px;background:#fafafa"></div>
<div class="a" style="left:472px;top:232px;width:0;height:0;border-left:4.5px solid transparent;border-right:4.5px solid transparent;border-bottom:6px solid #9a9a9a"></div>
<div class="a" style="left:472px;top:247px;width:9px;height:141px;background:#8f8f8f;border-radius:4.5px"></div>
<div class="a" style="left:472px;top:1057px;width:0;height:0;border-left:4.5px solid transparent;border-right:4.5px solid transparent;border-top:6px solid #9a9a9a"></div>
<div class="a" style="left:232px;top:1076px;width:178px;height:8px;background:#8f8f8f;border-radius:4px"></div>
<div class="a" style="left:217px;top:1073px;width:0;height:0;border-top:4px solid transparent;border-bottom:4px solid transparent;border-right:5px solid #9a9a9a"></div>
<div class="a" style="left:456px;top:1073px;width:0;height:0;border-top:4px solid transparent;border-bottom:4px solid transparent;border-left:5px solid #9a9a9a"></div>
<div id="main" class="a"></div>
<div class="a card" style="left:510px;top:121px;width:345px;height:308px"></div>
<div class="a card" style="left:860px;top:121px;width:340px;height:302px"></div>
<div class="a card" style="left:1205px;top:121px;width:684px;height:300px"></div>
<div class="a card" style="left:510px;top:444px;width:1379px;height:616px"></div>
<div class="a" style="left:511px;top:164px;width:343px;height:1px;background:#f0f0f0"></div>
<div class="a" style="left:861px;top:164px;width:338px;height:1px;background:#f0f0f0"></div>
<div class="a" style="left:1206px;top:164px;width:682px;height:1px;background:#f0f0f0"></div>
<div class="a" style="left:511px;top:487px;width:1377px;height:1px;background:#f0f0f0"></div>
<div class="a ctitle" style="left:527px;top:133px">区域概览</div>
<div class="a ctitle" style="left:876px;top:133px">设备概览</div>
<div class="a ctitle" style="left:1221px;top:133px">收入统计</div>
<div class="a ctitle" style="left:527px;top:456px">异常房间监测</div>
<svg class="a" style="left:531px;top:184px" width="26" height="26" viewBox="-13 -13 26 26"><circle cx="0" cy="0" r="12" fill="#e9e9f3"/><circle cx="0" cy="0" r="9.5" fill="#f3f3fb"/><path d="M0 -6.5 L7 -0.3 H5.6 V6.7 H1.7 V2.6 H-1.7 V6.7 H-5.6 V-0.3 H-7Z" fill="#5565c0"/></svg>
<div class="a num" style="left:567px;top:186px;color:#f27b1d">7792</div>
<div class="a lbl" style="left:567px;top:211px">房间总数</div>
<svg class="a" style="left:684px;top:187px" width="22" height="22" viewBox="-11 -11 22 22"><circle cx="0" cy="0" r="10" fill="#f5c443"/><path d="M-2.5 -3 L0 0 L2.5 -3 M0 0 V3.5 M-2 0.6 H2 M-2 2.2 H2" fill="none" stroke="#e0472a" stroke-width="1.2"/></svg>
<div class="a num" style="left:717px;top:191px;color:#f27b1d">2014.30万元</div>
<div class="a lbl" style="left:717px;top:217px">预支付总额</div>
<div class="a dash" style="left:511px;top:254px;width:343px"></div>
<svg class="a" style="left:531px;top:274px" width="26" height="26" viewBox="-13 -13 26 26"><circle cx="0" cy="0" r="12" fill="#6897f5"/><g transform="translate(0.5,0.4)"><rect x="-3.7" y="-7.7" width="7.5" height="15.2" rx="1.3" fill="#fff"/><rect x="-2.3" y="0.9" width="4.7" height="5.2" rx="0.5" fill="#6897f5"/><rect x="-1.8" y="1.1" width="9" height="2" rx="1" fill="#fff"/></g></svg>
<div class="a num" style="left:567px;top:276px;color:#f27b1d">5339</div>
<div class="a lbl" style="left:567px;top:301px">空置房间</div>
<svg class="a" style="left:682px;top:274px" width="26" height="26" viewBox="-13 -13 26 26"><circle cx="0" cy="0" r="12" fill="#1b8fd6"/><rect x="-5.5" y="-5" width="11" height="11" rx="1.5" fill="#fff"/><rect x="-4" y="-7" width="1.6" height="3" fill="#fff"/><rect x="2.4" y="-7" width="1.6" height="3" fill="#fff"/><path d="M-2.5 -2.5 L0 0.5 L2.5 -2.5 M0 0.5 V4 M-2 1 H2 M-2 2.6 H2" fill="none" stroke="#1b8fd6" stroke-width="1.2"/></svg>
<div class="a num" style="left:717px;top:281px;color:#f27b1d">2589.65万元</div>
<div class="a lbl" style="left:717px;top:307px">消费收入总额</div>
<div class="a dash" style="left:511px;top:344px;width:343px"></div>
<svg class="a" style="left:531px;top:364px" width="26" height="26" viewBox="-13 -13 26 26"><circle cx="0" cy="0" r="12" fill="#fbd0d2"/><g transform="translate(0.5,0.5)"><path d="M-5 -4.4 L1.5 -9.2 L5.8 -4.4Z" fill="#f9a21b"/><rect x="-8.1" y="-4.6" width="15.5" height="11.9" rx="0.6" fill="#e8393a"/><rect x="1.6" y="-0.5" width="6.7" height="3.9" rx="1.9" fill="#fde9ea"/><circle cx="3.4" cy="1.45" r="1" fill="#e8393a"/><path d="M-5.3 0.9 L-3.1 2.5 L-0.3 -0.5" fill="none" stroke="#fb8b86" stroke-width="0.9"/></g></svg>
<div class="a num" style="left:567px;top:366px;color:#f27b1d">809</div>
<div class="a lbl" style="left:567px;top:391px">欠费房间</div>
<svg class="a" style="left:682px;top:364px" width="26" height="26" viewBox="-13 -13 26 26"><circle cx="0" cy="0" r="12" fill="#82b1e8"/><g transform="translate(-0.4,0.4)"><circle cx="2.1" cy="1" r="6" fill="#fbe38a"/><circle cx="2.1" cy="1" r="4.8" fill="#efae18"/><path d="M0.2 -1.8 L1.6 0 L3 -1.8 M1.6 0 V3.4" fill="none" stroke="#fde7a0" stroke-width="1.1"/><path d="M-10.5 5 L-8.5 -2.5 L-2.8 -5.5 Q-1.5 0 -2.5 4.5 L-4.5 11.5Z" fill="#fbe5c6"/><circle cx="6" cy="-6.2" r="0.9" fill="#c8e6fb"/><circle cx="7.6" cy="-4.2" r="0.9" fill="#c8e6fb"/></g></svg>
<div class="a num" style="left:718px;top:366px;color:#f27b1d">1656</div>
<div class="a lbl" style="left:718px;top:391px">故障房间</div>
<svg class="a" style="left:880px;top:186px" width="30" height="30" viewBox="-15 -15 30 30"><circle cx="0" cy="0" r="14" fill="#fdd75b"/><g stroke="#e9d98a" stroke-width="0.6"><line x1="-7.6" y1="-5.7" x2="-3" y2="-2"/><line x1="7.9" y1="-5.7" x2="3" y2="-2"/><line x1="-9.1" y1="5.4" x2="-3" y2="3"/><line x1="9.1" y1="5.4" x2="3" y2="3"/></g><circle cx="-7.6" cy="-5.7" r="1.9" fill="#5d9fc8"/><circle cx="7.9" cy="-5.7" r="1.9" fill="#5d9fc8"/><circle cx="-9.1" cy="5.4" r="1.9" fill="#5d9fc8"/><circle cx="9.1" cy="5.4" r="1.9" fill="#5d9fc8"/><path d="M0 -5.2 L5.4 -2.4 V3.6 L0 5.8 L-5.2 3.6 V-2.4Z" fill="#1e88f0"/><path d="M0 -5.2 L5.4 -2.4 L0 0.3 L-5.2 -2.4Z" fill="#b8e8ff"/></svg>
<div class="a num" style="left:919px;top:187px;color:#f27b1d">651</div>
<div class="a lbl" style="left:919px;top:213px">集中器总数</div>
<svg class="a" style="left:1048.5px;top:187.5px" width="31.0" height="31.0" viewBox="-15.5 -15.5 31.0 31.0"><circle cx="0" cy="0" r="14.5" fill="#1890d6"/><path d="M0 -7.5 L7 -3.5 V4 L0 8 L-7 4 V-3.5Z M0 0 V8 M0 0 L7 -3.5 M0 0 L-7 -3.5" fill="none" stroke="#fff" stroke-width="1.8" stroke-linejoin="round"/></svg>
<div class="a num" style="left:1086px;top:187px;color:#f27b1d">200</div>
<div class="a lbl" style="left:1086px;top:213px">在线数</div>
<div class="a dash" style="left:861px;top:248px;width:343px"></div>
<svg class="a" style="left:880px;top:269px" width="30" height="30" viewBox="-15 -15 30 30"><circle cx="0" cy="0" r="14" fill="#9ee6e4"/><rect x="-4.9" y="-9.6" width="1.6" height="4" fill="#4a5a6a"/><rect x="2.9" y="-9.6" width="1.6" height="4" fill="#4a5a6a"/><path d="M-0.4 3.9 V9.2 H-8.3" fill="none" stroke="#4a6072" stroke-width="1.1"/><rect x="-7.4" y="-5.8" width="13.9" height="9.7" rx="1.2" fill="#f0595a" stroke="#7a3a40" stroke-width="0.8"/><path d="M-0.2 -4.5 L-2 -0.8 H0.3 L-1.3 2.6" fill="none" stroke="#fff" stroke-width="0.9"/><circle cx="5.9" cy="3.3" r="4.1" fill="#f5b95a" stroke="#3f4a3a" stroke-width="0.9"/><path d="M4.7 2 L5.9 3.4 L7.1 2 M5.9 3.4 V5.2" fill="none" stroke="#8a4a10" stroke-width="0.9"/></svg>
<div class="a num" style="left:920px;top:271px;color:#f27b1d">5665</div>
<div class="a lbl" style="left:920px;top:295px">电表总数</div>
<div class="a num" style="left:1013px;top:271px;color:#888">494</div>
<div class="a lbl" style="left:1013px;top:295px">电表拉闸</div>
<div class="a num" style="left:1104px;top:271px;color:#d7232c">0</div>
<div class="a lbl" style="left:1104px;top:295px">电表异常</div>
<div class="a dash" style="left:861px;top:334px;width:343px"></div>
<svg class="a" style="left:880px;top:354px" width="30" height="30" viewBox="-15 -15 30 30"><circle cx="0" cy="0" r="14" fill="#88eedf"/><path d="M-1.5 -8.7 L3.6 -1.2 A5.8 5.8 0 1 1 -6.6 -1.2Z" fill="#62d8e4" stroke="#2f5660" stroke-width="0.9" stroke-linejoin="round"/><path d="M-5.4 1 Q-5.6 3.5 -4.2 5" fill="none" stroke="#fff" stroke-width="1"/><circle cx="4" cy="4.1" r="4.3" fill="#f6c46a" stroke="#2f3a30" stroke-width="0.9"/><path d="M2.8 2.7 L4 4.1 L5.2 2.7 M4 4.1 V6" fill="none" stroke="#8a4a10" stroke-width="0.9"/></svg>
<div class="a num" style="left:920px;top:356px;color:#f27b1d">7346</div>
<div class="a lbl" style="left:920px;top:380px">水表统计</div>
<div class="a num" style="left:1013px;top:356px;color:#888">100</div>
<div class="a lbl" style="left:1013px;top:380px">水表关阀</div>
<div class="a num" style="left:1104px;top:356px;color:#d7232c">0</div>
<div class="a lbl" style="left:1104px;top:380px">水表异常</div>
<svg class="a" style="left:1205px;top:165px" width="684" height="256" viewBox="1205 165 684 256" font-family="Liberation Sans">
<line x1="1302.5" y1="235.3" x2="1848.5" y2="235.3" stroke="#ececec" stroke-width="1"/>
<line x1="1302.5" y1="256.4" x2="1848.5" y2="256.4" stroke="#ececec" stroke-width="1"/>
<line x1="1302.5" y1="277.3" x2="1848.5" y2="277.3" stroke="#ececec" stroke-width="1"/>
<line x1="1302.5" y1="298.3" x2="1848.5" y2="298.3" stroke="#ececec" stroke-width="1"/>
<line x1="1302.5" y1="319.4" x2="1848.5" y2="319.4" stroke="#ececec" stroke-width="1"/>
<line x1="1302.5" y1="340.5" x2="1848.5" y2="340.5" stroke="#ececec" stroke-width="1"/>
<line x1="1302.5" y1="361.9" x2="1848.5" y2="361.9" stroke="#ececec" stroke-width="1"/>
<line x1="1393.7" y1="235" x2="1393.7" y2="383" stroke="#ececec" stroke-width="1"/>
<line x1="1484.6" y1="235" x2="1484.6" y2="383" stroke="#ececec" stroke-width="1"/>
<line x1="1575.5" y1="235" x2="1575.5" y2="383" stroke="#ececec" stroke-width="1"/>
<line x1="1666.4" y1="235" x2="1666.4" y2="383" stroke="#ececec" stroke-width="1"/>
<line x1="1757.3" y1="235" x2="1757.3" y2="383" stroke="#ececec" stroke-width="1"/>
<line x1="1848.2" y1="235" x2="1848.2" y2="383" stroke="#ececec" stroke-width="1"/>
<line x1="1302.5" y1="235" x2="1302.5" y2="383.5" stroke="#d2d2d2" stroke-width="1"/>
<line x1="1302" y1="383.5" x2="1848.5" y2="383.5" stroke="#c8c8c8" stroke-width="1"/>
<text x="1293" y="238.0" font-size="12" fill="#999" text-anchor="end">3,500,000</text>
<text x="1293" y="259.1" font-size="12" fill="#999" text-anchor="end">3,000,000</text>
<text x="1293" y="280.0" font-size="12" fill="#999" text-anchor="end">2,500,000</text>
<text x="1293" y="301.0" font-size="12" fill="#999" text-anchor="end">2,000,000</text>
<text x="1293" y="322.1" font-size="12" fill="#999" text-anchor="end">1,500,000</text>
<text x="1293" y="343.2" font-size="12" fill="#999" text-anchor="end">1,000,000</text>
<text x="1293" y="364.6" font-size="12" fill="#999" text-anchor="end">500,000</text>
<text x="1293" y="385.9" font-size="12" fill="#999" text-anchor="end">0</text>
<text x="1302.8" y="400.2" font-size="12" fill="#999" text-anchor="middle">2024-07</text>
<text x="1393.7" y="400.2" font-size="12" fill="#999" text-anchor="middle">2024-09</text>
<text x="1484.6" y="400.2" font-size="12" fill="#999" text-anchor="middle">2024-11</text>
<text x="1575.5" y="400.2" font-size="12" fill="#999" text-anchor="middle">2025-01</text>
<text x="1666.4" y="400.2" font-size="12" fill="#999" text-anchor="middle">2025-03</text>
<text x="1757.3" y="400.2" font-size="12" fill="#999" text-anchor="middle">2025-05</text>
<text x="1848.2" y="400.2" font-size="12" fill="#999" text-anchor="middle">2025-07</text>
<path d="M1302.8 367.6 C1302.8 367.6 1325.5 367.6 1348.2 367.6 C1371.0 367.2 1371.0 366.0 1393.7 366.0 C1416.5 366.7 1416.4 370.0 1439.2 370.4 C1461.8 370.4 1461.9 369.5 1484.6 367.6 C1507.4 365.7 1507.3 363.4 1530.0 362.9 C1552.7 362.9 1552.8 364.3 1575.5 365.5 C1598.2 366.6 1598.2 367.3 1621.0 367.5 C1643.7 367.5 1646.3 367.5 1666.4 366.1 C1691.7 356.0 1688.8 332.0 1711.8 331.2 C1734.2 331.2 1732.3 355.2 1757.3 363.1 C1777.8 363.1 1789.4 363.1 1802.8 359.9 C1834.8 323.8 1848.2 260.7 1848.2 260.7" fill="none" stroke="#3a9fd8" stroke-width="2"/>
<path d="M1302.8 362.1 C1302.8 362.1 1325.5 361.3 1348.2 361.3 C1371.0 361.9 1371.1 362.1 1393.7 364.4 C1416.5 366.8 1416.6 370.7 1439.2 370.7 C1462.0 369.7 1461.6 362.5 1484.6 360.5 C1507.1 360.5 1507.3 361.7 1530.0 362.9 C1552.8 364.2 1552.8 364.8 1575.5 365.5 C1598.2 365.8 1599.2 365.8 1621.0 365.8 C1644.6 360.9 1642.7 351.6 1666.4 346.6 C1688.2 346.6 1689.4 346.6 1711.8 346.6 C1734.8 349.1 1734.5 356.1 1757.3 356.4 C1780.0 356.4 1789.2 356.4 1802.8 347.7 C1834.7 309.6 1848.2 248.1 1848.2 248.1" fill="none" stroke="#67d6ad" stroke-width="2"/>
<circle cx="1302.8" cy="367.6" r="4.5" fill="#fff" stroke="#3a9fd8" stroke-width="2"/>
<circle cx="1348.2" cy="367.6" r="4.5" fill="#fff" stroke="#3a9fd8" stroke-width="2"/>
<circle cx="1393.7" cy="366.0" r="4.5" fill="#fff" stroke="#3a9fd8" stroke-width="2"/>
<circle cx="1439.2" cy="370.4" r="4.5" fill="#fff" stroke="#3a9fd8" stroke-width="2"/>
<circle cx="1484.6" cy="367.6" r="4.5" fill="#fff" stroke="#3a9fd8" stroke-width="2"/>
<circle cx="1530.0" cy="362.9" r="4.5" fill="#fff" stroke="#3a9fd8" stroke-width="2"/>
<circle cx="1575.5" cy="365.5" r="4.5" fill="#fff" stroke="#3a9fd8" stroke-width="2"/>
<circle cx="1621.0" cy="367.5" r="4.5" fill="#fff" stroke="#3a9fd8" stroke-width="2"/>
<circle cx="1666.4" cy="366.1" r="4.5" fill="#fff" stroke="#3a9fd8" stroke-width="2"/>
<circle cx="1711.8" cy="331.2" r="4.5" fill="#fff" stroke="#3a9fd8" stroke-width="2"/>
<circle cx="1757.3" cy="363.1" r="4.5" fill="#fff" stroke="#3a9fd8" stroke-width="2"/>
<circle cx="1802.8" cy="359.9" r="4.5" fill="#fff" stroke="#3a9fd8" stroke-width="2"/>
<circle cx="1848.2" cy="260.7" r="4.5" fill="#fff" stroke="#3a9fd8" stroke-width="2"/>
<circle cx="1302.8" cy="362.1" r="4.5" fill="#fff" stroke="#67d6ad" stroke-width="2"/>
<circle cx="1348.2" cy="361.3" r="4.5" fill="#fff" stroke="#67d6ad" stroke-width="2"/>
<circle cx="1393.7" cy="364.4" r="4.5" fill="#fff" stroke="#67d6ad" stroke-width="2"/>
<circle cx="1439.2" cy="370.7" r="4.5" fill="#fff" stroke="#67d6ad" stroke-width="2"/>
<circle cx="1484.6" cy="360.5" r="4.5" fill="#fff" stroke="#67d6ad" stroke-width="2"/>
<circle cx="1530.0" cy="362.9" r="4.5" fill="#fff" stroke="#67d6ad" stroke-width="2"/>
<circle cx="1575.5" cy="365.5" r="4.5" fill="#fff" stroke="#67d6ad" stroke-width="2"/>
<circle cx="1621.0" cy="365.8" r="4.5" fill="#fff" stroke="#67d6ad" stroke-width="2"/>
<circle cx="1666.4" cy="346.6" r="4.5" fill="#fff" stroke="#67d6ad" stroke-width="2"/>
<circle cx="1711.8" cy="346.6" r="4.5" fill="#fff" stroke="#67d6ad" stroke-width="2"/>
<circle cx="1757.3" cy="356.4" r="4.5" fill="#fff" stroke="#67d6ad" stroke-width="2"/>
<circle cx="1802.8" cy="347.7" r="4.5" fill="#fff" stroke="#67d6ad" stroke-width="2"/>
<circle cx="1848.2" cy="248.1" r="4.5" fill="#fff" stroke="#67d6ad" stroke-width="2"/>
<line x1="1482" y1="186.3" x2="1508" y2="186.3" stroke="#3a9fd8" stroke-width="2"/><circle cx="1495" cy="186.3" r="5" fill="#fff" stroke="#3a9fd8" stroke-width="2"/>
<text x="1512.5" y="190.5" font-size="12" fill="#888">预付费</text>
<line x1="1559.5" y1="186.3" x2="1584.5" y2="186.3" stroke="#67d6ad" stroke-width="2"/><circle cx="1572" cy="186.3" r="5" fill="#fff" stroke="#67d6ad" stroke-width="2"/>
<text x="1589.5" y="190.5" font-size="12" fill="#888">扣费</text>
<g fill="none" stroke="#9a9a9a" stroke-width="1" stroke-linejoin="round">
<path d="M1770.5 189.5 L1772 189 L1774.7 182.5 L1776.9 193.1 L1779.7 188.4 L1781.3 191.3 L1785 191.3"/><line x1="1770" y1="197.5" x2="1785" y2="197.5"/>
<rect x="1799.5" y="188" width="2.5" height="7"/><rect x="1804" y="185.5" width="2.5" height="9.5"/><rect x="1809" y="182.5" width="2.5" height="12.5"/><line x1="1798" y1="197.5" x2="1812.5" y2="197.5"/>
<path d="M1825.3 189.7 A7.8 7.8 0 0 1 1840.3 186.5 M1840.3 189.7 A7.8 7.8 0 0 1 1825.3 193"/><path d="M1838 185.5 L1840.8 186.6 L1841.5 183.6"/><path d="M1827.5 194.2 L1824.8 192.9 L1824 196"/>
<path d="M1859.7 182 V194.4 M1853.1 188.1 L1859.7 194.4 L1866.3 188.1"/><path d="M1853.1 193.4 V197.5 H1866.3 V193.4"/>
</g>
</svg>
<div class="a" style="left:526px;top:508px;width:1347px;height:477px;border:1px solid #e6e6e6;background:#fff"></div>
<div class="a" style="left:527px;top:509px;width:1345px;height:38px;background:#f2f2f2"></div>
<div class="a" style="left:527px;top:547px;width:1345px;height:1px;background:#e6e6e6"></div>
<div class="a" style="left:527px;top:586px;width:1345px;height:1px;background:#e6e6e6"></div>
<div class="a" style="left:527px;top:625px;width:1345px;height:1px;background:#e6e6e6"></div>
<div class="a" style="left:527px;top:664px;width:1345px;height:1px;background:#e6e6e6"></div>
<div class="a" style="left:527px;top:703px;width:1345px;height:1px;background:#e6e6e6"></div>
<div class="a" style="left:527px;top:742px;width:1345px;height:1px;background:#e6e6e6"></div>
<div class="a" style="left:527px;top:781px;width:1345px;height:1px;background:#e6e6e6"></div>
<div class="a" style="left:527px;top:820px;width:1345px;height:1px;background:#e6e6e6"></div>
<div class="a" style="left:527px;top:859px;width:1345px;height:1px;background:#e6e6e6"></div>
<div class="a" style="left:527px;top:898px;width:1345px;height:1px;background:#e6e6e6"></div>
<div class="a" style="left:527px;top:937px;width:1345px;height:1px;background:#e6e6e6"></div>
<div class="a" style="left:657px;top:509px;width:1px;height:428px;background:#e6e6e6"></div>
<div class="a" style="left:778px;top:509px;width:1px;height:428px;background:#e6e6e6"></div>
<div class="a" style="left:1029px;top:509px;width:1px;height:428px;background:#e6e6e6"></div>
<div class="a" style="left:1140px;top:509px;width:1px;height:428px;background:#e6e6e6"></div>
<div class="a" style="left:1246px;top:509px;width:1px;height:428px;background:#e6e6e6"></div>
<div class="a" style="left:1352px;top:509px;width:1px;height:428px;background:#e6e6e6"></div>
<div class="a" style="left:1458px;top:509px;width:1px;height:428px;background:#e6e6e6"></div>
<div class="a" style="left:1559px;top:509px;width:1px;height:428px;background:#e6e6e6"></div>
<div class="a" style="left:1720px;top:509px;width:1px;height:428px;background:#e6e6e6"></div>
<div class="a td" style="left:542px;top:520px">区域</div>
<svg class="a" style="left:580px;top:522px" width="10" height="12" viewBox="0 0 10 12"><path d="M5 0 L10 5 H0Z M5 12 L10 7 H0Z" fill="#b2b2b2"/></svg>
<div class="a td" style="left:674px;top:520px">房间</div>
<svg class="a" style="left:711px;top:522px" width="10" height="12" viewBox="0 0 10 12"><path d="M5 0 L10 5 H0Z M5 12 L10 7 H0Z" fill="#b2b2b2"/></svg>
<div class="a td" style="left:794px;top:520px">异常内容</div>
<div class="a td" style="left:1050px;top:520px">当前余额</div>
<svg class="a" style="left:1116px;top:522px" width="10" height="12" viewBox="0 0 10 12"><path d="M5 0 L10 5 H0Z M5 12 L10 7 H0Z" fill="#b2b2b2"/></svg>
<div class="a td" style="left:1158px;top:520px">报警余额</div>
<svg class="a" style="left:1224px;top:522px" width="10" height="12" viewBox="0 0 10 12"><path d="M5 0 L10 5 H0Z M5 12 L10 7 H0Z" fill="#b2b2b2"/></svg>
<div class="a td" style="left:1264px;top:520px">关停余额</div>
<svg class="a" style="left:1330px;top:522px" width="10" height="12" viewBox="0 0 10 12"><path d="M5 0 L10 5 H0Z M5 12 L10 7 H0Z" fill="#b2b2b2"/></svg>
<div class="a td" style="left:1377px;top:520px">关停配置</div>
<div class="a td" style="left:1480px;top:520px">延时配置</div>
<div class="a td" style="left:1575px;top:520px">最后缴费时间</div>
<svg class="a" style="left:1669px;top:522px" width="10" height="12" viewBox="0 0 10 12"><path d="M5 0 L10 5 H0Z M5 12 L10 7 H0Z" fill="#b2b2b2"/></svg>
<div class="a td" style="left:1736px;top:520px">最后通讯时间</div>
<svg class="a" style="left:1830px;top:522px" width="10" height="12" viewBox="0 0 10 12"><path d="M5 0 L10 5 H0Z M5 12 L10 7 H0Z" fill="#b2b2b2"/></svg>
<div class="a td" style="left:542px;top:559px">龙腾广场公寓</div>
<div class="a td" style="left:674px;top:559px">1442</div>
<div class="a td" style="left:794px;top:559px">余额剩余[6.790000]告警</div>
<div class="a td" style="left:1025px;width:120px;text-align:center;top:559px">6.79</div>
<div class="a td" style="left:1133px;width:120px;text-align:center;top:559px">20</div>
<div class="a td" style="left:1239px;width:120px;text-align:center;top:559px">-1</div>
<div class="a td" style="left:1345px;width:120px;text-align:center;top:559px">水电费</div>
<div class="a td" style="left:1448.5px;width:120px;text-align:center;top:559px">否</div>
<div class="a td" style="left:1575px;top:559px">2025-07-25 00:09:52</div>
<div class="a td" style="left:542px;top:598px">龙腾广场公寓</div>
<div class="a td" style="left:674px;top:598px">1207</div>
<div class="a td" style="left:794px;top:598px">余额剩余[19.170000]告警</div>
<div class="a td" style="left:1025px;width:120px;text-align:center;top:598px">19.17</div>
<div class="a td" style="left:1133px;width:120px;text-align:center;top:598px">20</div>
<div class="a td" style="left:1239px;width:120px;text-align:center;top:598px">-1</div>
<div class="a td" style="left:1345px;width:120px;text-align:center;top:598px">水电费</div>
<div class="a td" style="left:1448.5px;width:120px;text-align:center;top:598px">否</div>
<div class="a td" style="left:1575px;top:598px">2025-07-24 22:47:11</div>
<div class="a td" style="left:542px;top:637px">龙腾广场公寓</div>
<div class="a td" style="left:674px;top:637px">538</div>
<div class="a td" style="left:794px;top:637px">余额剩余[2.210000]告警</div>
<div class="a td" style="left:1025px;width:120px;text-align:center;top:637px">2.21</div>
<div class="a td" style="left:1133px;width:120px;text-align:center;top:637px">20</div>
<div class="a td" style="left:1239px;width:120px;text-align:center;top:637px">-1</div>
<div class="a td" style="left:1345px;width:120px;text-align:center;top:637px">水电费</div>
<div class="a td" style="left:1448.5px;width:120px;text-align:center;top:637px">否</div>
<div class="a td" style="left:1575px;top:637px">2025-07-24 22:37:16</div>
<div class="a td" style="left:542px;top:676px">龙腾广场公寓</div>
<div class="a td" style="left:674px;top:676px">2241</div>
<div class="a td" style="left:794px;top:676px">余额剩余[9.560000]告警</div>
<div class="a td" style="left:1025px;width:120px;text-align:center;top:676px">9.56</div>
<div class="a td" style="left:1133px;width:120px;text-align:center;top:676px">20</div>
<div class="a td" style="left:1239px;width:120px;text-align:center;top:676px">-1</div>
<div class="a td" style="left:1345px;width:120px;text-align:center;top:676px">水电费</div>
<div class="a td" style="left:1448.5px;width:120px;text-align:center;top:676px">否</div>
<div class="a td" style="left:1575px;top:676px">2025-07-24 15:41:48</div>
<div class="a td" style="left:542px;top:715px">龙腾广场公寓</div>
<div class="a td" style="left:674px;top:715px">1802</div>
<div class="a td" style="left:794px;top:715px">余额剩余[10.570000]告警</div>
<div class="a td" style="left:1025px;width:120px;text-align:center;top:715px">10.57</div>
<div class="a td" style="left:1133px;width:120px;text-align:center;top:715px">20</div>
<div class="a td" style="left:1239px;width:120px;text-align:center;top:715px">-1</div>
<div class="a td" style="left:1345px;width:120px;text-align:center;top:715px">水电费</div>
<div class="a td" style="left:1448.5px;width:120px;text-align:center;top:715px">否</div>
<div class="a td" style="left:1575px;top:715px">2025-07-24 14:57:08</div>
<div class="a td" style="left:542px;top:754px">龙腾广场公寓</div>
<div class="a td" style="left:674px;top:754px">233</div>
<div class="a td" style="left:794px;top:754px">余额剩余[4.030000]告警</div>
<div class="a td" style="left:1025px;width:120px;text-align:center;top:754px">4.03</div>
<div class="a td" style="left:1133px;width:120px;text-align:center;top:754px">20</div>
<div class="a td" style="left:1239px;width:120px;text-align:center;top:754px">-1</div>
<div class="a td" style="left:1345px;width:120px;text-align:center;top:754px">水电费</div>
<div class="a td" style="left:1448.5px;width:120px;text-align:center;top:754px">否</div>
<div class="a td" style="left:1575px;top:754px">2025-07-24 14:11:40</div>
<div class="a td" style="left:542px;top:793px">福州琦鑫智能...</div>
<div class="a td" style="left:674px;top:793px">采菊苑-6054</div>
<div class="a td" style="left:794px;top:793px">余额剩余[7.520000]告警</div>
<div class="a td" style="left:1025px;width:120px;text-align:center;top:793px">7.52</div>
<div class="a td" style="left:1133px;width:120px;text-align:center;top:793px">30</div>
<div class="a td" style="left:1239px;width:120px;text-align:center;top:793px">0</div>
<div class="a td" style="left:1345px;width:120px;text-align:center;top:793px">福州琦鑫</div>
<div class="a td" style="left:1448.5px;width:120px;text-align:center;top:793px">是</div>
<div class="a td" style="left:1575px;top:793px">2025-07-24 13:19:40</div>
<div class="a td" style="left:542px;top:832px">龙腾广场公寓</div>
<div class="a td" style="left:674px;top:832px">521</div>
<div class="a td" style="left:794px;top:832px">余额剩余[16.440000]告警</div>
<div class="a td" style="left:1025px;width:120px;text-align:center;top:832px">16.44</div>
<div class="a td" style="left:1133px;width:120px;text-align:center;top:832px">20</div>
<div class="a td" style="left:1239px;width:120px;text-align:center;top:832px">-1</div>
<div class="a td" style="left:1345px;width:120px;text-align:center;top:832px">水电费</div>
<div class="a td" style="left:1448.5px;width:120px;text-align:center;top:832px">否</div>
<div class="a td" style="left:1575px;top:832px">2025-07-24 12:50:11</div>
<div class="a td" style="left:542px;top:871px">龙腾广场公寓</div>
<div class="a td" style="left:674px;top:871px">1344</div>
<div class="a td" style="left:794px;top:871px">余额剩余[15.190000]告警</div>
<div class="a td" style="left:1025px;width:120px;text-align:center;top:871px">15.19</div>
<div class="a td" style="left:1133px;width:120px;text-align:center;top:871px">20</div>
<div class="a td" style="left:1239px;width:120px;text-align:center;top:871px">-1</div>
<div class="a td" style="left:1345px;width:120px;text-align:center;top:871px">水电费</div>
<div class="a td" style="left:1448.5px;width:120px;text-align:center;top:871px">否</div>
<div class="a td" style="left:1575px;top:871px">2025-07-24 05:52:31</div>
<div class="a td" style="left:542px;top:910px">龙腾广场公寓</div>
<div class="a td" style="left:674px;top:910px">625</div>
<div class="a td" style="left:794px;top:910px">余额剩余[1.700000]告警</div>
<div class="a td" style="left:1025px;width:120px;text-align:center;top:910px">1.7</div>
<div class="a td" style="left:1133px;width:120px;text-align:center;top:910px">20</div>
<div class="a td" style="left:1239px;width:120px;text-align:center;top:910px">-1</div>
<div class="a td" style="left:1345px;width:120px;text-align:center;top:910px">水电费</div>
<div class="a td" style="left:1448.5px;width:120px;text-align:center;top:910px">否</div>
<div class="a td" style="left:1575px;top:910px">2025-07-24 02:39:09</div>
<div class="a" style="left:526px;top:1012px;font-size:12px;line-height:16px;color:#333;white-space:nowrap">共 1873 条</div>
<div class="a pg" style="left:593px;width:68px;color:#c2c2c2">上一页</div>
<div class="a pg" style="left:699px;width:38px">2</div>
<div class="a pg" style="left:736px;width:38px">3</div>
<div class="a pg" style="left:773px;width:39px">4</div>
<div class="a pg" style="left:811px;width:39px">5</div>
<div class="a pg" style="left:849px;width:44px">…</div>
<div class="a pg" style="left:892px;width:52px">188</div>
<div class="a pg" style="left:943px;width:69px">下一页</div>
<div class="a pg" style="left:660px;width:39px;background:#009688;border-color:#009688;color:#fff;border-radius:2px">1</div>
<div class="a pg" style="left:1020px;width:86px;text-align:left;padding-left:8px;border-radius:2px">10 条/页</div>
<svg class="a" style="left:1092px;top:1016px" width="10" height="8" viewBox="0 0 10 8"><path d="M1 1.5 L5 5.5 L9 1.5" fill="none" stroke="#111" stroke-width="2"/></svg>
<div class="a" style="left:1126px;top:1012px;font-size:12px;line-height:16px;color:#999;white-space:nowrap">到第</div>
<div class="a pg" style="left:1160px;width:40px;border-radius:2px">1</div>
<div class="a" style="left:1210px;top:1012px;font-size:12px;line-height:16px;color:#999;white-space:nowrap">页</div>
<div class="a pg" style="left:1232px;width:46px;border-radius:2px">确定</div>
</body></html>
